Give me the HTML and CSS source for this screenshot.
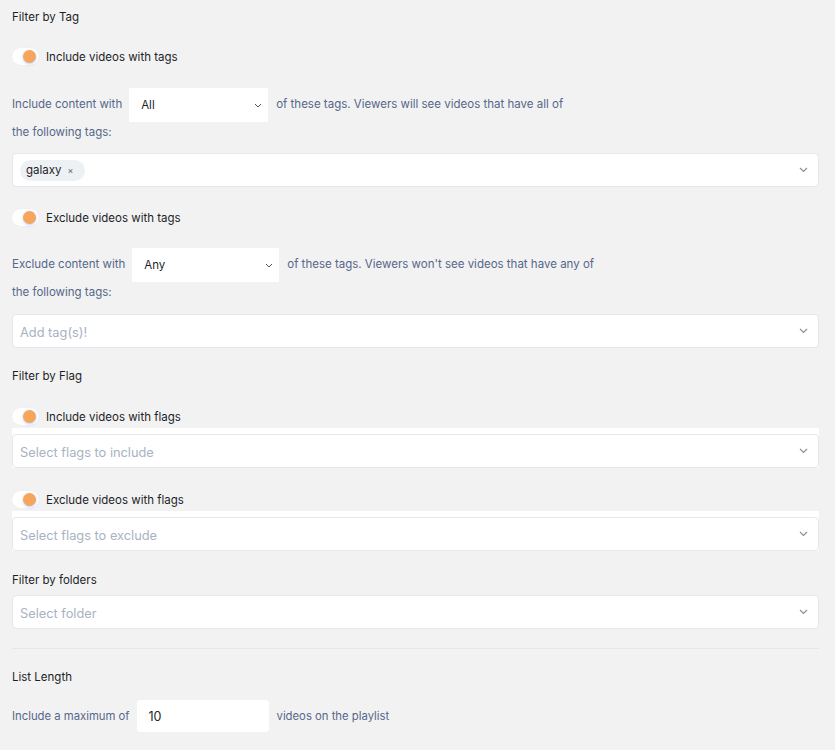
FILE: index.html
```html
<!DOCTYPE html>
<html>
<head>
<meta charset="utf-8">
<link rel="stylesheet" href="styles.css">
</head>
<body>
<div class="page">
  <div class="heading h-first">Filter by Tag</div>

  <div class="toggle-row tr-1">
    <span class="toggle"><span class="knob"></span></span>
    <span class="toggle-label">Include videos with tags</span>
  </div>

  <p class="desc d-1">Include content with<span class="select s-all"><span class="sel-val">All</span><svg class="chev" width="8" height="5" viewBox="0 0 8 5"><path d="M1 1 L4 4 L7 1" fill="none" stroke="#555" stroke-width="1"/></svg></span>of these tags. Viewers will see videos that have all of<br>the following tags:</p>

  <div class="box b-tags">
    <span class="chip">galaxy <span class="x">×</span></span>
    <svg class="chev-r" width="9" height="6" viewBox="0 0 9 6"><path d="M1 1 L4.5 4.5 L8 1" fill="none" stroke="#8a8f99" stroke-width="1.2"/></svg>
  </div>

  <div class="toggle-row tr-2">
    <span class="toggle"><span class="knob"></span></span>
    <span class="toggle-label">Exclude videos with tags</span>
  </div>

  <p class="desc d-2">Exclude content with<span class="select s-any"><span class="sel-val">Any</span><svg class="chev" width="8" height="5" viewBox="0 0 8 5"><path d="M1 1 L4 4 L7 1" fill="none" stroke="#555" stroke-width="1"/></svg></span>of these tags. Viewers won't see videos that have any of<br>the following tags:</p>

  <div class="box b-add">
    <span class="ph">Add tag(s)!</span>
    <svg class="chev-r" width="9" height="6" viewBox="0 0 9 6"><path d="M1 1 L4.5 4.5 L8 1" fill="none" stroke="#8a8f99" stroke-width="1.2"/></svg>
  </div>

  <div class="heading h-flag">Filter by Flag</div>

  <div class="toggle-row tr-3">
    <span class="toggle"><span class="knob"></span></span>
    <span class="toggle-label">Include videos with flags</span>
  </div>
  <div class="strip">
    <div class="box">
      <span class="ph">Select flags to include</span>
      <svg class="chev-r" width="9" height="6" viewBox="0 0 9 6"><path d="M1 1 L4.5 4.5 L8 1" fill="none" stroke="#8a8f99" stroke-width="1.2"/></svg>
    </div>
  </div>

  <div class="toggle-row tr-4">
    <span class="toggle"><span class="knob"></span></span>
    <span class="toggle-label">Exclude videos with flags</span>
  </div>
  <div class="strip">
    <div class="box">
      <span class="ph">Select flags to exclude</span>
      <svg class="chev-r" width="9" height="6" viewBox="0 0 9 6"><path d="M1 1 L4.5 4.5 L8 1" fill="none" stroke="#8a8f99" stroke-width="1.2"/></svg>
    </div>
  </div>

  <div class="heading h-folder">Filter by folders</div>
  <div class="box b-folder">
    <span class="ph">Select folder</span>
    <svg class="chev-r" width="9" height="6" viewBox="0 0 9 6"><path d="M1 1 L4.5 4.5 L8 1" fill="none" stroke="#8a8f99" stroke-width="1.2"/></svg>
  </div>

  <hr class="divider">

  <div class="heading h-len">List Length</div>
  <div class="len-row">
    <span class="desc-inline">Include a maximum of</span>
    <span class="num-input">10</span>
    <span class="desc-inline">videos on the playlist</span>
  </div>
</div>
</body>
</html>
```

FILE: styles.css
```css
html, body {
  margin: 0;
  padding: 0;
  background: #f2f2f2;
}
body {
  font-family: Inter, "Noto Sans", "Liberation Sans", sans-serif;
  font-size: 11.5px;
  color: #1c1f29;
}
.page {
  padding: 7px 16px 0 12px;
  display: flex;
  flex-direction: column;
}
.heading {
  height: 20px;
  line-height: 20px;
  font-size: 11.5px;
  color: #1c1f29;
}
.h-flag { margin-top: 18px; }
.h-folder { margin-top: 19px; }
.h-len { margin-top: 18px; }

.toggle-row {
  display: flex;
  align-items: center;
  height: 17px;
  gap: 7px;
}
.tr-1 { margin-top: 21px; }
.tr-2 { margin-top: 22px; }
.tr-3 { margin-top: 22px; }
.tr-4 { margin-top: 23px; }
.toggle {
  position: relative;
  width: 27px;
  height: 17px;
  border-radius: 9px;
  background: #ffffff;
  box-shadow: 0 0 1px rgba(0,0,0,0.08);
  flex: none;
}
.knob {
  position: absolute;
  left: 11px;
  top: 2px;
  width: 13px;
  height: 13px;
  border-radius: 50%;
  background: #f7a55a;
  box-shadow: 0 1px 3px rgba(90, 140, 255, 0.45);
}
.toggle-label {
  font-size: 11.5px;
  color: #1c1f29;
}

.desc {
  margin: 0;
  line-height: 20px;
  font-size: 11.5px;
  color: #56678a;
}
.d-1 { margin-top: 23px; }
.d-2 { margin-top: 22px; }
.select {
  display: inline-flex;
  align-items: center;
  justify-content: space-between;
  height: 34px;
  vertical-align: middle;
  background: #ffffff;
  padding: 0 6px 0 12px;
  box-sizing: border-box;
  margin: 0 8px 0 7px;
  color: #1c1f29;
}
.s-all { width: 139px; }
.s-any { width: 147px; margin-left: 7px; }
.chev { display: block; }

.box {
  display: flex;
  align-items: center;
  justify-content: space-between;
  height: 34px;
  box-sizing: border-box;
  background: #ffffff;
  border: 1px solid #e6e6ee;
  border-radius: 4px;
  padding: 0 10px 0 7px;
}
.b-tags { margin-top: 11px; }
.b-add { margin-top: 12px; }
.b-folder { margin-top: 5px; }
.ph {
  font-size: 12.8px;
  color: #a9b2c3;
  padding-top: 2px;
}
.chev-r { display: block; }
.chip {
  display: inline-flex;
  align-items: center;
  height: 21px;
  padding: 0 12px 0 6px;
  border-radius: 11px;
  background: #eef1f4;
  font-size: 11.5px;
  color: #1c1f29;
}
.chip .x {
  font-size: 9px;
  color: #666;
  margin-left: 6px;
}
.strip {
  margin-top: 3px;
  background: #ffffff;
  padding-top: 6px;
}

.divider {
  border: none;
  border-top: 1px solid #e6e4ee;
  margin: 19px 0 0 0;
  height: 0;
}

.len-row {
  display: flex;
  align-items: center;
  margin-top: 13px;
}
.desc-inline {
  font-size: 11.3px;
  color: #56678a;
}
.num-input {
  width: 132px;
  height: 32px;
  box-sizing: border-box;
  background: #ffffff;
  border-radius: 3px;
  margin: 0 8px 0 7px;
  padding-left: 12px;
  display: flex;
  align-items: center;
  font-size: 12.5px;
  color: #1c1f29;
}
```
